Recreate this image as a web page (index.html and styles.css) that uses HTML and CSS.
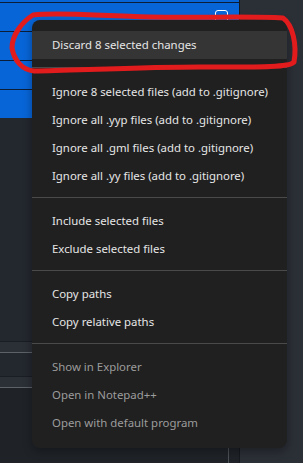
FILE: index.html
```html
<!DOCTYPE html>
<html lang="en">
  <head>
    <meta charset="UTF-8" />
    <meta name="viewport" content="width=device-width, initial-scale=1.0" />
    <title>Context menu</title>
    <link rel="stylesheet" href="styles.css">
  </head>
  <body>
    <div class="sidebar">
      <div class="file-list">
        <div class="file-row file-row-cut"></div>
        <div class="file-row"><span class="checkbox"></span></div>
        <div class="file-row"></div>
        <div class="file-row"></div>
        <div class="file-row file-row-last"></div>
      </div>
      <div class="empty"></div>
      <div class="band"></div>
      <div class="band-gap"></div>
      <div class="band"></div>
      <div class="bottom">
        <div class="bottom-main"></div>
      </div>
    </div>
    <div class="rail"></div>

    <div class="menu">
      <div class="menu-item hover">Discard 8 selected changes</div>
      <div class="separator first"></div>
      <div class="menu-item">Ignore 8 selected files (add to .gitignore)</div>
      <div class="menu-item">Ignore all .yyp files (add to .gitignore)</div>
      <div class="menu-item">Ignore all .gml files (add to .gitignore)</div>
      <div class="menu-item">Ignore all .yy files (add to .gitignore)</div>
      <div class="separator"></div>
      <div class="menu-item">Include selected files</div>
      <div class="menu-item">Exclude selected files</div>
      <div class="separator"></div>
      <div class="menu-item">Copy paths</div>
      <div class="menu-item">Copy relative paths</div>
      <div class="separator"></div>
      <div class="menu-item disabled">Show in Explorer</div>
      <div class="menu-item disabled">Open in Notepad++</div>
      <div class="menu-item disabled">Open with default program</div>
    </div>

    <!-- hand drawn circle around the first item -->
    <svg class="scribble" width="303" height="463" viewBox="0 0 303 463">
      <path d="M33 15 C60 12 100 16 150 17 C200 18 250 16 283 18 C293 25 297 45 294 62 C290 68 250 67 200 67 C150 67 80 70 34 71 C22 70 14 60 12 48 C12 35 22 22 33 15 Z" />
    </svg>
  </body>
</html>
```

FILE: styles.css
```css
body {
  margin: 0;
  width: 303px;
  height: 463px;
  overflow: hidden;
  position: relative;
  display: flex;
  background-color: #23272e;
  font-family: "Noto Sans", "Open Sans", sans-serif;
}
.sidebar {
  width: 239px;
  border-right: 1px solid #16191d;
  display: flex;
  flex-direction: column;
}
.rail {
  flex: 1;
  background-color: #2b2f36;
}
.file-list {
  background-color: #0865d8;
}
.file-row {
  height: 28px;
  border-bottom: 1px solid #0c1d36;
  display: flex;
  justify-content: flex-end;
  align-items: flex-start;
  padding-right: 11px;
}
.file-row-cut {
  height: 2px;
}
.file-row-last {
  border-bottom: none;
}
.checkbox {
  width: 11px;
  height: 11px;
  margin-top: 7px;
  border: 1px solid #ffffff;
  border-radius: 3px;
}
.empty {
  height: 223px;
}
.band {
  height: 10px;
  background-color: #2b2f36;
  border-top: 1px solid #1a1d22;
  border-bottom: 1px solid #5d6269;
}
.band-gap {
  height: 23px;
}
.bottom {
  flex: 1;
  background-color: #1f2328;
}
.bottom-main {
  width: 228px;
  height: 100%;
  border-right: 1px solid #4b5159;
}
.menu {
  position: absolute;
  left: 32px;
  top: 20px;
  width: 255px;
  padding: 11px 0;
  background-color: #202020;
  border-radius: 8px;
  box-shadow: 0 3px 10px rgba(0, 0, 0, 0.35);
}
.menu-item {
  height: 28px;
  line-height: 28px;
  padding-left: 20px;
  font-size: 11.4px;
  color: #e6e6e6;
  white-space: nowrap;
}
.menu-item.hover {
  background-color: #353535;
}
.menu-item.disabled {
  color: #9c9c9c;
}
.separator {
  height: 1px;
  margin: 7px 0 9px;
  background-color: #4a4a4a;
}
.separator.first {
  margin: 8px 0 10px;
}
.scribble {
  position: absolute;
  left: 0;
  top: 0;
  pointer-events: none;
}
.scribble path {
  fill: none;
  stroke: #e21b1d;
  stroke-width: 5;
  stroke-linecap: round;
  stroke-linejoin: round;
}
```
